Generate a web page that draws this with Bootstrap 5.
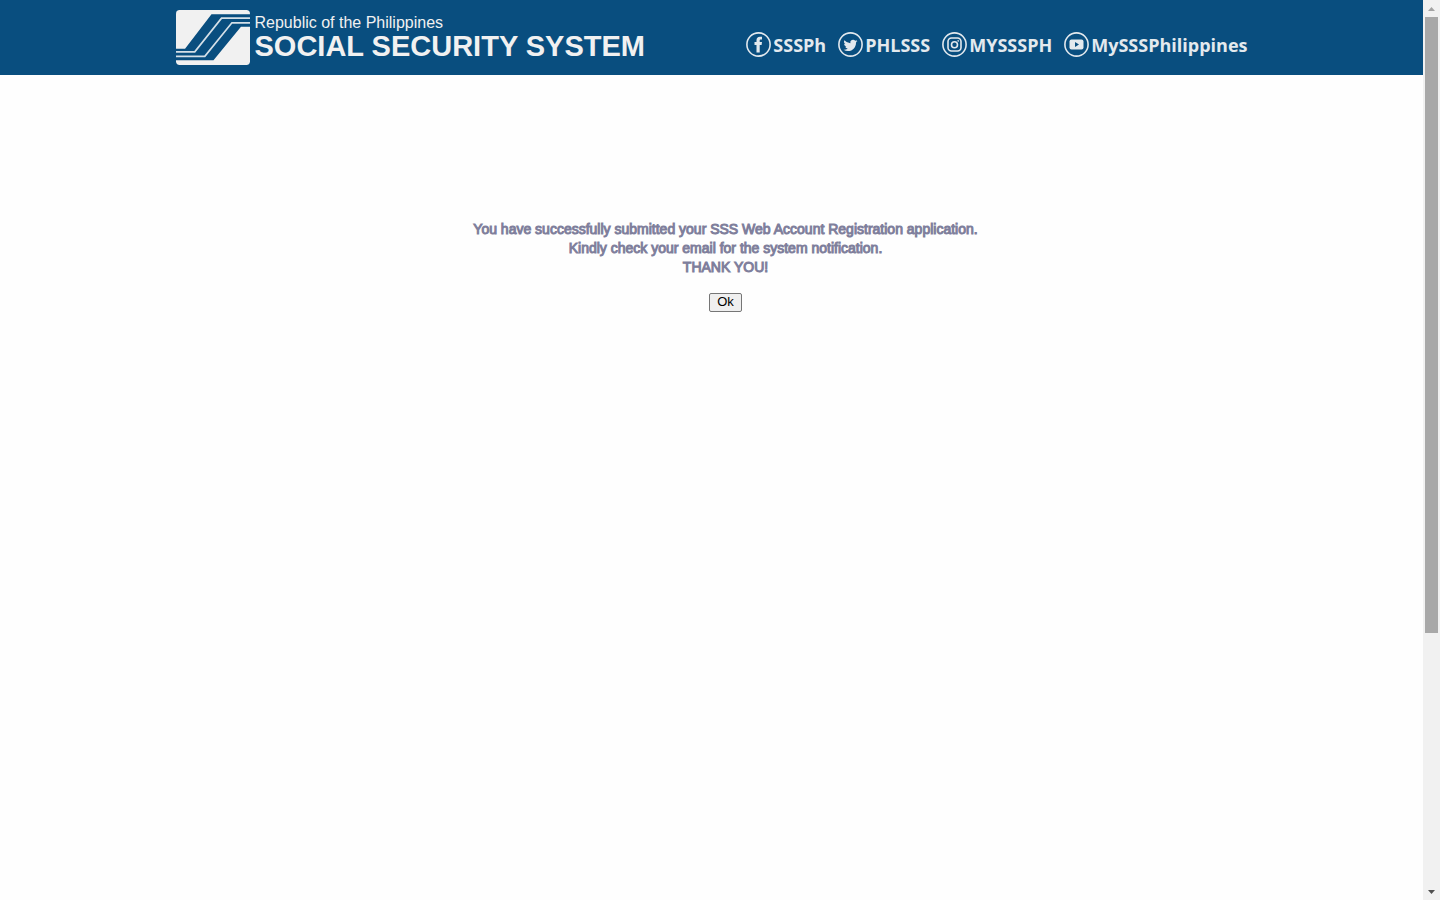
<!DOCTYPE html>
<html lang="en">
<head>
<meta charset="utf-8">
<meta name="viewport" content="width=device-width, initial-scale=1">
<title>Social Security System</title>
<link href="https://cdn.jsdelivr.net/npm/bootstrap@5.3.0/dist/css/bootstrap.min.css" rel="stylesheet">
<style>
  body { font-family: "Liberation Sans", Arial, sans-serif; background: #fefefe; }
  .site-header { background: #094e7f; height: 75px; }
  .site-inner { max-width: 1072px; }
  .brand { color: #f1f1f1; gap: 5px; }
  .brand-text { padding-bottom: 4px; }
  .brand-top { font-size: 16px; line-height: 20px; }
  .brand-name { font-size: 29px; line-height: 26px; font-weight: 700; }
  .social { gap: 12px; padding-top: 14px; }
  .social a { color: #e3e9ee; gap: 2px; font: 700 18px/24px "Open Sans", sans-serif; }
  .notice { padding: 145px 0 0 28px; }
  .notice-text { color: #7f7f9c; font-size: 14px; line-height: 19px; margin-bottom: 12px; -webkit-text-stroke: 1px #7f7f9c; }
  .ok-btn { font-size: 13px; line-height: 15px; padding: 0 7px 2px; color: #000; background: #efefef; border: 1px solid #767676; border-radius: 2px; }
  .scroll-rail { width: 17px; background: #f1f1f1; }
  .scroll-thumb { background: #a8a8a8; margin: 0 2px; height: 616px; }
  .scroll-end { height: 17px; }
</style>
</head>
<body class="d-flex min-vh-100">
  <div class="flex-grow-1">
    <header class="site-header d-flex align-items-center">
      <div class="site-inner w-100 mx-auto d-flex justify-content-between align-items-center">
        <a href="#" class="brand d-flex align-items-center text-decoration-none">
          <svg width="74" height="55" viewBox="18 30 221 165" preserveAspectRatio="none" aria-hidden="true">
            <rect x="18" y="30" width="221" height="165" rx="11" fill="#f1f1f1"/>
            <path d="M18 146H45L124 43H240V80H212L130 181H18Z" fill="#094e7f"/>
            <path d="M18 155.500H74L154 54.500H240M18 169H104L185 68.500H240" fill="none" stroke="#d5e0e8" stroke-width="5"/>
          </svg>
          <span class="brand-text d-flex flex-column">
            <span class="brand-top">Republic of the Philippines</span>
            <span class="brand-name">SOCIAL SECURITY SYSTEM</span>
          </span>
        </a>
        <nav class="social d-flex" aria-label="Social media">
          <a href="#" class="d-flex align-items-center text-decoration-none">
            <svg width="25" height="25" viewBox="0 0 25 25" aria-hidden="true"><circle cx="12.500" cy="12.500" r="11.600" fill="none" stroke="currentColor" stroke-width="1.600"/><path d="M10.500 20.500V13H8.500V10H10.500V8.300C10.500 5.900 11.700 4.700 13.900 4.700H16V7.600H14.600C13.900 7.600 13.700 7.900 13.700 8.600V10H16L15.600 13H13.700V20.500Z" fill="currentColor"/></svg>
            <span>SSSPh</span></a>
          <a href="#" class="d-flex align-items-center text-decoration-none">
            <svg width="25" height="25" viewBox="0 0 25 25" aria-hidden="true"><circle cx="12.500" cy="12.500" r="11.600" fill="none" stroke="currentColor" stroke-width="1.600"/><path transform="translate(5.500 6) scale(.87)" d="M5.030 15C11.070 15 14.370 10 14.370 5.670V5.240A6.700 6.700 0 0 0 16 3.540 6.600 6.600 0 0 1 14.120 4.060 3.300 3.300 0 0 0 15.560 2.250 6.600 6.600 0 0 1 13.480 3.040 3.280 3.280 0 0 0 7.880 6.030 9.300 9.300 0 0 1 1.110 2.600 3.300 3.300 0 0 0 2.130 6.990 3.200 3.200 0 0 1 .64 6.580V6.620A3.300 3.300 0 0 0 3.280 9.840 3.200 3.200 0 0 1 1.800 9.900 3.300 3.300 0 0 0 4.860 12.180 6.600 6.600 0 0 1 0 13.520 9.300 9.300 0 0 0 5.030 15Z" fill="currentColor"/></svg>
            <span>PHLSSS</span></a>
          <a href="#" class="d-flex align-items-center text-decoration-none">
            <svg width="25" height="25" viewBox="0 0 25 25" fill="none" stroke="currentColor" stroke-width="1.600" aria-hidden="true"><circle cx="12.500" cy="12.500" r="11.600"/><rect x="6" y="6" width="13" height="13" rx="3.500"/><circle cx="12.500" cy="12.700" r="3"/><circle cx="16.200" cy="8.900" r=".5" stroke-width="1"/></svg>
            <span>MYSSSPH</span></a>
          <a href="#" class="d-flex align-items-center text-decoration-none">
            <svg width="25" height="25" viewBox="0 0 25 25" aria-hidden="true"><circle cx="12.500" cy="12.500" r="11.600" fill="none" stroke="currentColor" stroke-width="1.600"/><rect x="5.500" y="7.500" width="14" height="10" rx="2" fill="currentColor"/><path d="M11 10L15 12.500L11 15Z" fill="#094e7f"/></svg>
            <span>MySSSPhilippines</span></a>
        </nav>
      </div>
    </header>
    <main class="notice text-center">
      <p class="notice-text">You have successfully submitted your SSS Web Account Registration application.<br>Kindly check your email for the system notification.<br>THANK YOU!</p>
      <button type="button" class="ok-btn">Ok</button>
    </main>
  </div>
  <div class="scroll-rail d-flex flex-column flex-shrink-0" aria-hidden="true">
    <div class="scroll-end d-flex align-items-center justify-content-center"><svg width="7" height="4" viewBox="0 0 7 4"><path d="M0 4L3.500 0L7 4Z" fill="#a3a3a3"/></svg></div>
    <div class="scroll-thumb"></div>
    <div class="scroll-end d-flex align-items-center justify-content-center mt-auto"><svg width="7" height="4" viewBox="0 0 7 4"><path d="M0 0L3.500 4L7 0Z" fill="#505050"/></svg></div>
  </div>
<script src="https://cdn.jsdelivr.net/npm/bootstrap@5.3.0/dist/js/bootstrap.bundle.min.js"></script>
</body>
</html>
